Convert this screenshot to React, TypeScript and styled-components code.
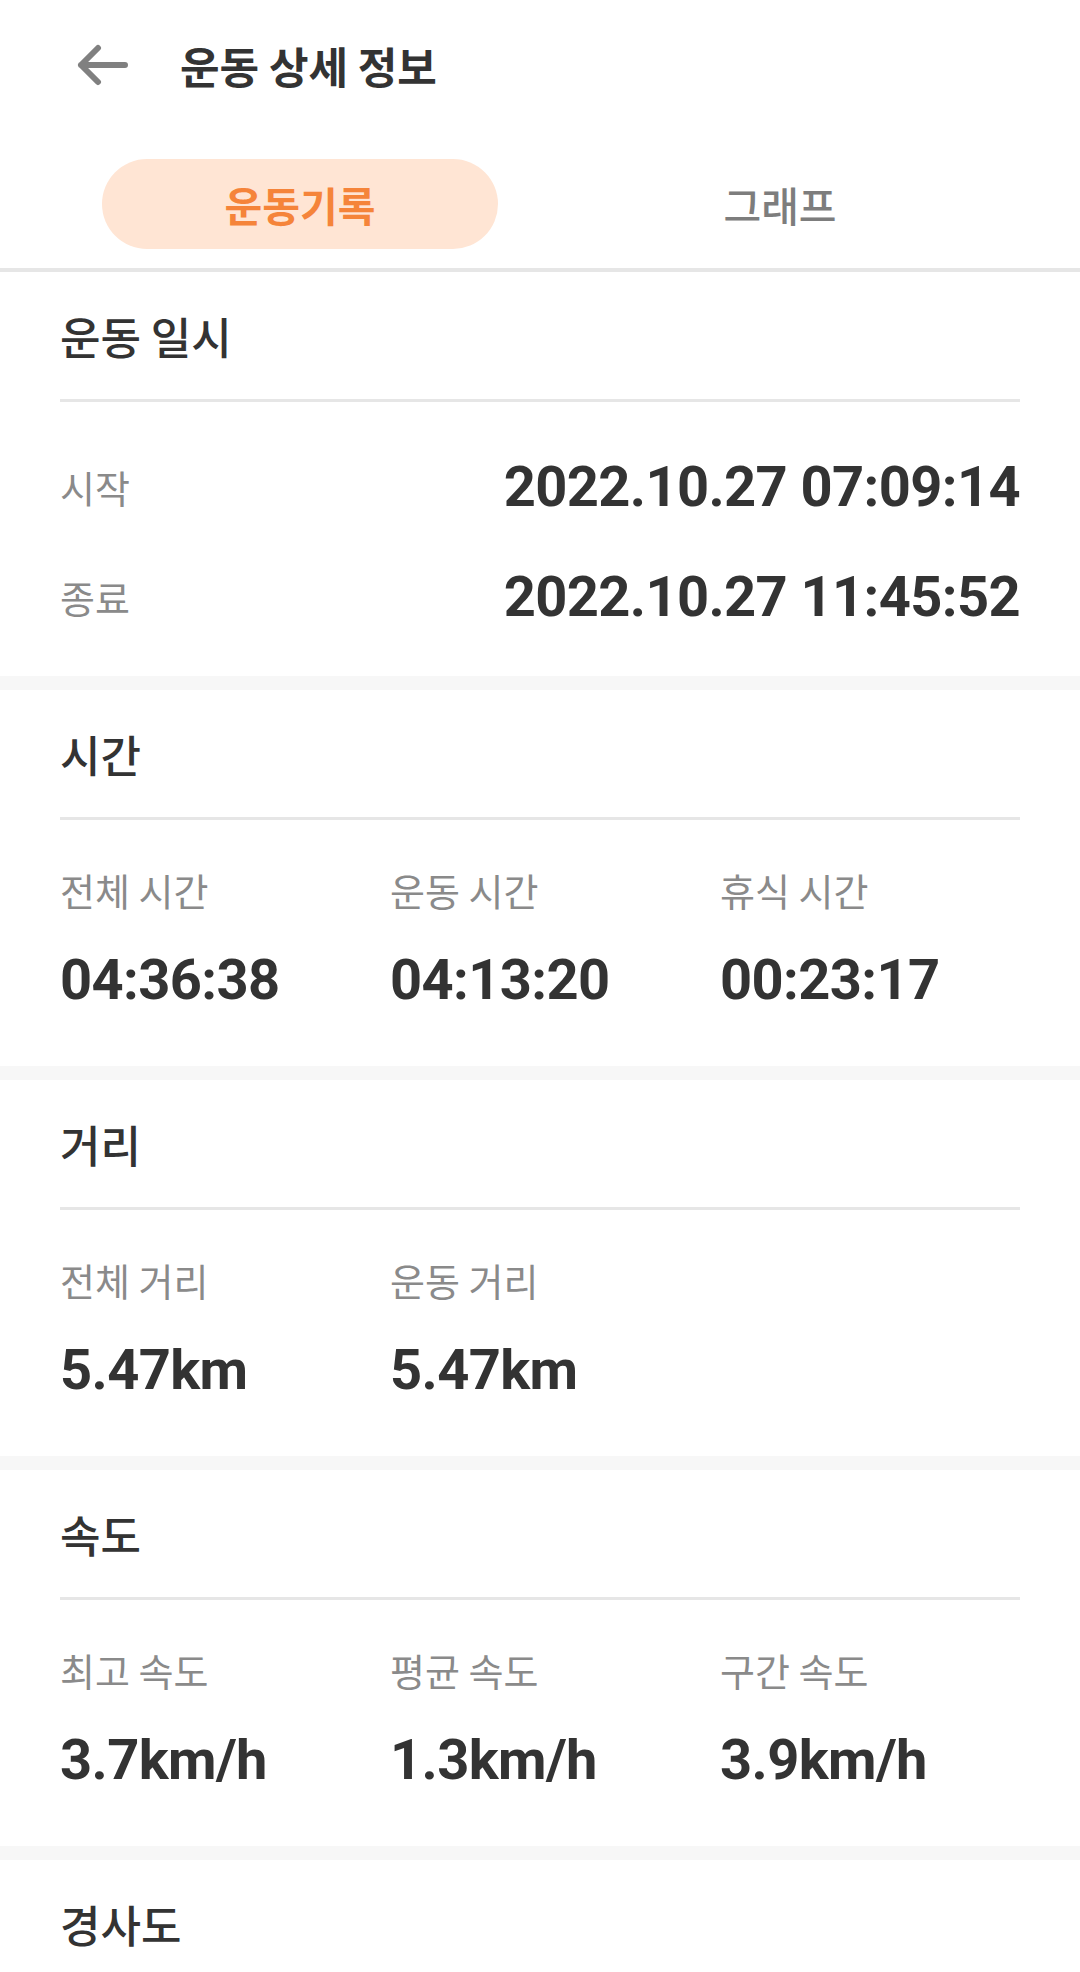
import React, { FC } from "react";
import styled, { createGlobalStyle } from "styled-components";

const GlobalStyle = createGlobalStyle`
  html, body {
    margin: 0;
    padding: 0;
    background: #ffffff;
  }
  body {
    font-family: "Noto Sans CJK KR", "Noto Sans", sans-serif;
    color: #333333;
  }
`;

const Page = styled.div`
  width: 1080px;
  min-height: 1972px;
  background: #ffffff;
  overflow: hidden;
`;

const Header = styled.header`
  height: 130px;
  display: flex;
  align-items: center;
  padding-left: 76px;
  gap: 52px;
`;

const BackButton = styled.button`
  border: none;
  background: none;
  padding: 0;
  width: 52px;
  height: 42px;
  display: flex;
  align-items: center;
  justify-content: center;
  cursor: pointer;
`;

const Title = styled.h1`
  margin: 0;
  font-size: 43px;
  font-weight: 700;
  color: #333333;
`;

const Tabs = styled.nav`
  height: 138px;
  display: grid;
  grid-template-columns: 480px 480px;
  padding: 0 60px;
  align-items: center;
  border-bottom: 4px solid #e6e6e6;
`;

const Tab = styled.button<{ $active?: boolean }>`
  justify-self: center;
  width: 396px;
  height: 90px;
  margin-top: 10px;
  border: none;
  border-radius: 45px;
  background: ${(p) => (p.$active ? "#ffe5d4" : "transparent")};
  color: ${(p) => (p.$active ? "#f5843a" : "#7d7d7d")};
  font-family: "Noto Sans CJK KR", sans-serif;
  font-size: 41px;
  font-weight: ${(p) => (p.$active ? 700 : 500)};
  cursor: pointer;
`;

const Section = styled.section<{ $last?: boolean }>`
  padding: 0 60px;
  border-bottom: ${(p) => (p.$last ? "none" : "14px solid #f7f7f7")};
`;

const SectionTitle = styled.h2`
  margin: 0;
  height: 127px;
  display: flex;
  align-items: center;
  font-size: 44px;
  font-weight: 500;
  color: #333333;
  border-bottom: 3px solid #e6e6e6;
`;

const DateList = styled.div`
  padding: 30px 0 24px;
`;

const DateRow = styled.div`
  height: 110px;
  display: flex;
  align-items: center;
  justify-content: space-between;
`;

const Label = styled.span`
  font-size: 38px;
  font-weight: 400;
  color: #8a8a8a;
  line-height: 50px;
`;

const Value = styled.span`
  font-family: Roboto, "Liberation Sans", sans-serif;
  font-size: 56px;
  font-weight: 700;
  color: #333333;
  line-height: 66px;
  letter-spacing: -0.6px;
`;

const StatGrid = styled.div`
  display: grid;
  grid-template-columns: repeat(3, 330px);
  padding: 45px 0 53px;
`;

const Stat = styled.div`
  display: flex;
  flex-direction: column;
  gap: 32px;
`;

const BackArrow: FC = () => (
  <svg width="52" height="42" viewBox="0 0 52 42" fill="none">
    <path
      d="M5 21 H49 M22 4 L5 21 L22 38"
      stroke="#808080"
      strokeWidth="6"
      strokeLinecap="round"
      strokeLinejoin="round"
    />
  </svg>
);

const stats = [
  {
    title: "시간",
    items: [
      { label: "전체 시간", value: "04:36:38" },
      { label: "운동 시간", value: "04:13:20" },
      { label: "휴식 시간", value: "00:23:17" },
    ],
  },
  {
    title: "거리",
    items: [
      { label: "전체 거리", value: "5.47km" },
      { label: "운동 거리", value: "5.47km" },
    ],
  },
  {
    title: "속도",
    items: [
      { label: "최고 속도", value: "3.7km/h" },
      { label: "평균 속도", value: "1.3km/h" },
      { label: "구간 속도", value: "3.9km/h" },
    ],
  },
];

export default function App() {
  return (
    <Page>
      <GlobalStyle />
      <Header>
        <BackButton aria-label="뒤로">
          <BackArrow />
        </BackButton>
        <Title>운동 상세 정보</Title>
      </Header>

      <Tabs>
        <Tab $active>운동기록</Tab>
        <Tab>그래프</Tab>
      </Tabs>

      <Section>
        <SectionTitle>운동 일시</SectionTitle>
        <DateList>
          <DateRow>
            <Label>시작</Label>
            <Value>2022.10.27 07:09:14</Value>
          </DateRow>
          <DateRow>
            <Label>종료</Label>
            <Value>2022.10.27 11:45:52</Value>
          </DateRow>
        </DateList>
      </Section>

      {stats.map((s) => (
        <Section key={s.title}>
          <SectionTitle>{s.title}</SectionTitle>
          <StatGrid>
            {s.items.map((it) => (
              <Stat key={it.label}>
                <Label>{it.label}</Label>
                <Value>{it.value}</Value>
              </Stat>
            ))}
          </StatGrid>
        </Section>
      ))}

      <Section $last>
        <SectionTitle>경사도</SectionTitle>
      </Section>
    </Page>
  );
}
